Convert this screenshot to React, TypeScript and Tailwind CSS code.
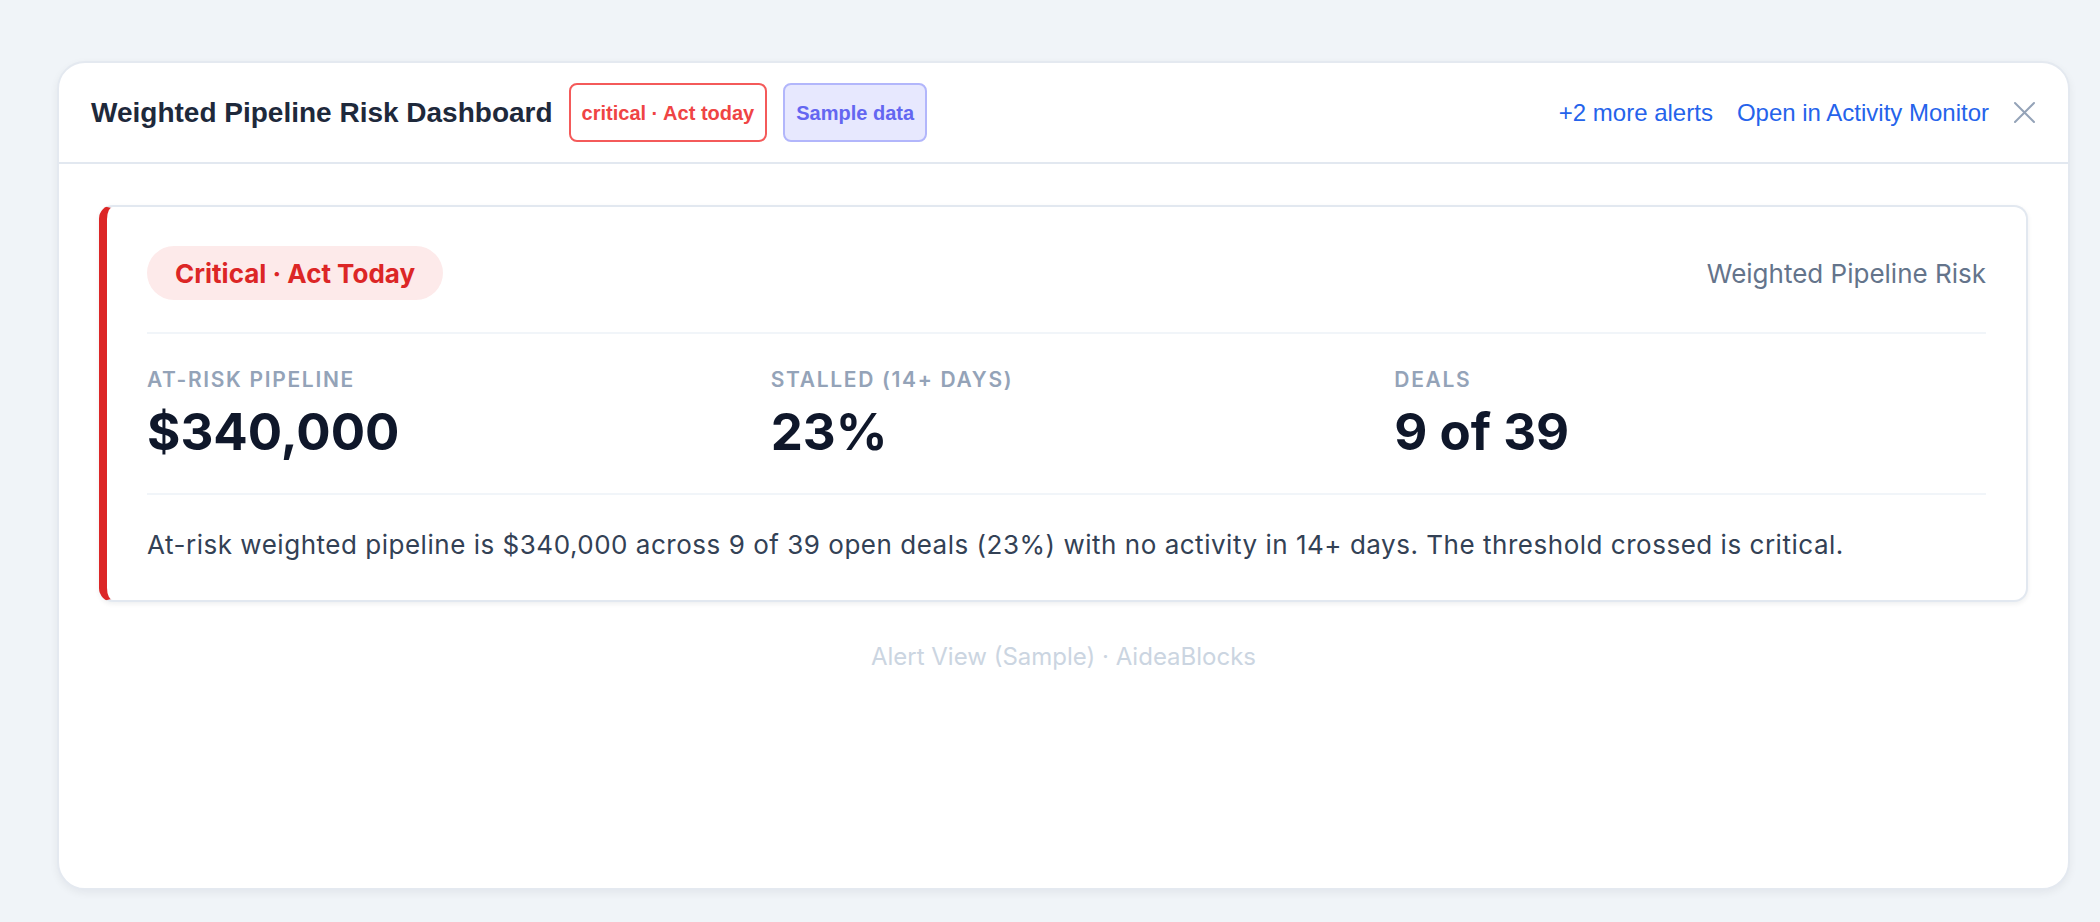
import React from "react";

const metrics = [
  { label: "At-risk pipeline", value: "$340,000" },
  { label: "Stalled (14+ days)", value: "23%" },
  { label: "Deals", value: "9 of 39" },
];

function CloseIcon() {
  return (
    <svg width="23" height="23" viewBox="0 0 23 23" fill="none" stroke="#94a3b8" strokeWidth="2" strokeLinecap="round">
      <path d="M2 2L21 21M21 2L2 21" />
    </svg>
  );
}

export default function App() {
  return (
    <div className="min-h-screen bg-[#f0f4f8] pt-[61px] pl-[57px] pr-[30px]">
      <div className="h-[829px] overflow-hidden rounded-[28px] border-2 border-[#e4e9f0] bg-white shadow-[0_3px_8px_rgba(15,23,42,0.06)]">
        <header className="flex items-center justify-between border-b-2 border-[#e2e8f0] px-8 py-5 font-['Liberation_Sans',Arial,sans-serif]">
          <div className="flex items-center gap-4">
            <h1 className="text-[28px] font-bold text-[#1e293b]">Weighted Pipeline Risk Dashboard</h1>
            <span className="inline-flex h-[59px] items-center rounded-lg border-2 border-[#f45a5a] bg-white px-[11px] text-[20px] font-bold text-[#ef4444]">
              critical · Act today
            </span>
            <span className="inline-flex h-[59px] items-center rounded-lg border-2 border-[#b2b6fb] bg-[#e7e8fe] px-[11px] text-[20px] font-bold text-[#6366f1]">
              Sample data
            </span>
          </div>
          <div className="flex items-center gap-6 text-[24px] text-[#2563eb]">
            <a href="#">+2 more alerts</a>
            <a href="#">Open in Activity Monitor</a>
            <button type="button" aria-label="Close" className="flex items-center">
              <CloseIcon />
            </button>
          </div>
        </header>

        <main className="px-10 pt-[41px] font-['Inter',sans-serif]">
          <section className="rounded-[14px] border-2 border-l-8 border-[#e2e8f0] border-l-[#dc2626] bg-white px-10 pt-[39px] pb-[39px] shadow-[0_2px_5px_rgba(15,23,42,0.07)]">
            <div className="flex items-center justify-between border-b-2 border-[#f1f5f9] pb-8">
              <span className="inline-flex h-[54px] items-center rounded-full bg-[#fdeaea] px-7 text-[26px] font-bold text-[#dc2626]">
                Critical · Act Today
              </span>
              <span className="text-[26px] text-[#64748b]">Weighted Pipeline Risk</span>
            </div>

            <div className="grid grid-cols-3 gap-8 border-b-2 border-[#f1f5f9] pt-8 pb-9">
              {metrics.map((m) => (
                <div key={m.label}>
                  <div className="text-[21px] leading-7 font-semibold tracking-[0.08em] text-[#94a3b8] uppercase">{m.label}</div>
                  <div className="mt-3 text-[51px] leading-none font-bold text-[#0f172a]">{m.value}</div>
                </div>
              ))}
            </div>

            <p className="pt-[34px] text-[26px] leading-[32px] tracking-[0.02em] text-[#334155]">
              At-risk weighted pipeline is $340,000 across 9 of 39 open deals (23%) with no activity in 14+ days. The threshold crossed is critical.
            </p>
          </section>

          <p className="mt-[37px] text-center text-[24px] leading-9 text-[#cbd5e1]">Alert View (Sample) · AideaBlocks</p>
        </main>
      </div>
    </div>
  );
}
